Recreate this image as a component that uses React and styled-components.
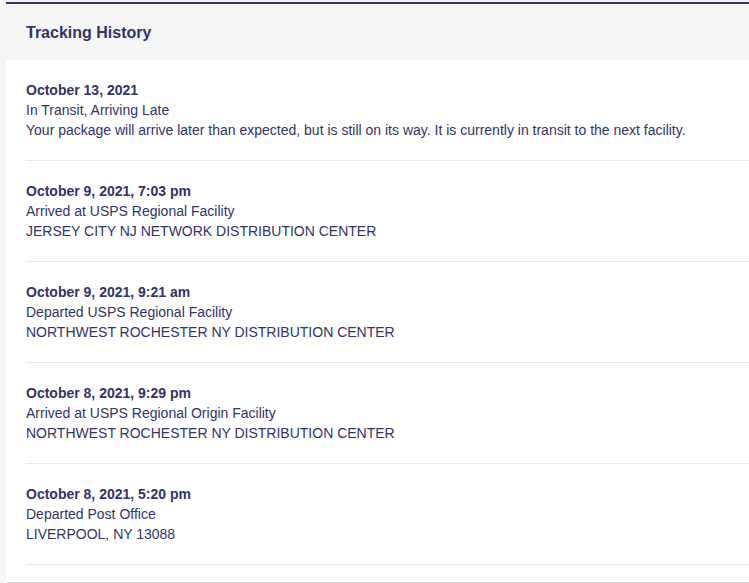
import React from 'react';
import styled, { createGlobalStyle } from 'styled-components';

const GlobalStyle = createGlobalStyle`
  html, body {
    margin: 0;
    padding: 0;
    background: #f6f6f6;
  }
  body {
    font-family: "Liberation Sans", Arial, sans-serif;
    color: #333366;
  }
`;

const Page = styled.div`
  padding: 2px 0 0 6px;
  min-height: 583px;
  box-sizing: border-box;
`;

const Panel = styled.section`
  border-top: 2px solid #333366;
  border-bottom: 1px solid #d8d8d8;
  background: #fff;
`;

const Header = styled.header`
  background: #f6f6f6;
  height: 56px;
  box-sizing: border-box;
  display: flex;
  align-items: center;
  margin-left: -6px;
  padding: 2px 20px 0 26px;

  h2 {
    margin: 0;
    font-size: 16px;
    font-weight: 700;
    color: #333366;
  }
`;

const List = styled.div`
  padding: 0 0 17px 20px;
`;

const Entry = styled.div`
  padding: 20px 0;
  border-bottom: 1px solid #e8e8e8;
  font-size: 14px;
  line-height: 20px;
`;

const DateLine = styled.div`
  font-weight: 700;
`;

const Line = styled.div``;

const events = [
  {
    date: 'October 13, 2021',
    status: 'In Transit, Arriving Late',
    detail:
      'Your package will arrive later than expected, but is still on its way. It is currently in transit to the next facility.',
  },
  {
    date: 'October 9, 2021, 7:03 pm',
    status: 'Arrived at USPS Regional Facility',
    detail: 'JERSEY CITY NJ NETWORK DISTRIBUTION CENTER',
  },
  {
    date: 'October 9, 2021, 9:21 am',
    status: 'Departed USPS Regional Facility',
    detail: 'NORTHWEST ROCHESTER NY DISTRIBUTION CENTER',
  },
  {
    date: 'October 8, 2021, 9:29 pm',
    status: 'Arrived at USPS Regional Origin Facility',
    detail: 'NORTHWEST ROCHESTER NY DISTRIBUTION CENTER',
  },
  {
    date: 'October 8, 2021, 5:20 pm',
    status: 'Departed Post Office',
    detail: 'LIVERPOOL, NY 13088',
  },
];

export default function App() {
  return (
    <>
      <GlobalStyle />
      <Page>
        <Panel>
          <Header>
            <h2>Tracking History</h2>
          </Header>
          <List>
            {events.map((e) => (
              <Entry key={e.date}>
                <DateLine>{e.date}</DateLine>
                <Line>{e.status}</Line>
                <Line>{e.detail}</Line>
              </Entry>
            ))}
          </List>
        </Panel>
      </Page>
    </>
  );
}
